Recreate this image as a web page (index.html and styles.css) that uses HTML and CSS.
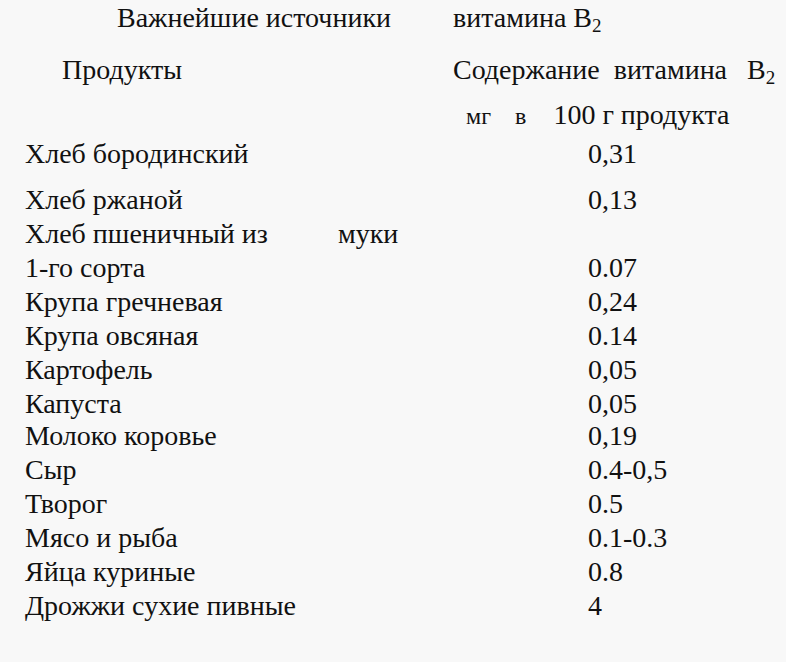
FILE: index.html
```html
<!DOCTYPE html>
<html>
<head>
<meta charset="utf-8">
<title>Важнейшие источники витамина B2</title>
<link rel="stylesheet" href="styles.css">
</head>
<body>
<div class="page">
  <div class="title">
    <span class="title-left">Важнейшие источники</span>
    <span class="title-right">витамина B<sub>2</sub></span>
  </div>
  <div class="head">
    <span class="head-left">Продукты</span>
    <span class="head-right"><span>Содержание</span><span class="w2">витамина</span><span class="w3">B<sub>2</sub></span></span>
  </div>
  <div class="unit">
    <span class="unit-mg">мг</span><span class="unit-v">в</span><span class="unit-big">100 г продукта</span>
  </div>
  <div class="rows">
    <div class="row first"><span class="name">Хлеб бородинский</span><span class="val">0,31</span></div>
    <div class="row"><span class="name">Хлеб ржаной</span><span class="val">0,13</span></div>
    <div class="row"><span class="name"><span class="split">Хлеб пшеничный из</span>муки</span><span class="val"></span></div>
    <div class="row"><span class="name">1-го сорта</span><span class="val">0.07</span></div>
    <div class="row"><span class="name">Крупа гречневая</span><span class="val">0,24</span></div>
    <div class="row"><span class="name">Крупа овсяная</span><span class="val">0.14</span></div>
    <div class="row"><span class="name">Картофель</span><span class="val">0,05</span></div>
    <div class="row short"><span class="name">Капуста</span><span class="val">0,05</span></div>
    <div class="row"><span class="name">Молоко коровье</span><span class="val">0,19</span></div>
    <div class="row"><span class="name">Сыр</span><span class="val">0.4-0,5</span></div>
    <div class="row"><span class="name">Творог</span><span class="val">0.5</span></div>
    <div class="row"><span class="name">Мясо и рыба</span><span class="val">0.1-0.3</span></div>
    <div class="row"><span class="name">Яйца куриные</span><span class="val">0.8</span></div>
    <div class="row"><span class="name">Дрожжи сухие пивные</span><span class="val">4</span></div>
  </div>
</div>
</body>
</html>
```
FILE: styles.css
```css
html, body {
  margin: 0;
  padding: 0;
  background: #f8f8f8;
}
.page {
  width: 786px;
  height: 662px;
  overflow: hidden;
  font-family: "Liberation Serif", serif;
  color: #111111;
  font-size: 28px;
}
sub {
  font-size: 19px;
  vertical-align: -5px;
  line-height: 0;
}
.title {
  display: flex;
  height: 34px;
  line-height: 34px;
  margin-top: 1px;
}
.title-left {
  width: 336px;
  padding-left: 117px;
  white-space: nowrap;
}
.head {
  display: flex;
  height: 34px;
  line-height: 34px;
  margin-top: 18px;
}
.head-left {
  width: 391px;
  padding-left: 62px;
}
.head-right {
  display: flex;
  white-space: nowrap;
}
.w2 {
  margin-left: 14px;
}
.w3 {
  margin-left: 20px;
}
.unit {
  display: flex;
  align-items: baseline;
  height: 34px;
  line-height: 34px;
  margin-top: 11px;
  padding-left: 466px;
}
.unit-mg,
.unit-v {
  font-size: 24px;
}
.unit-v {
  margin-left: 24px;
}
.unit-big {
  margin-left: 27px;
}
.rows {
  display: flex;
  flex-direction: column;
  padding-left: 25px;
}
.row {
  display: flex;
  height: 34px;
  line-height: 34px;
}
.row.first {
  height: 46px;
  margin-top: 5px;
}
.row.short {
  height: 32px;
}
.name {
  width: 563px;
  white-space: nowrap;
  display: flex;
}
.split {
  width: 313px;
}
.val {
  white-space: nowrap;
}
```
